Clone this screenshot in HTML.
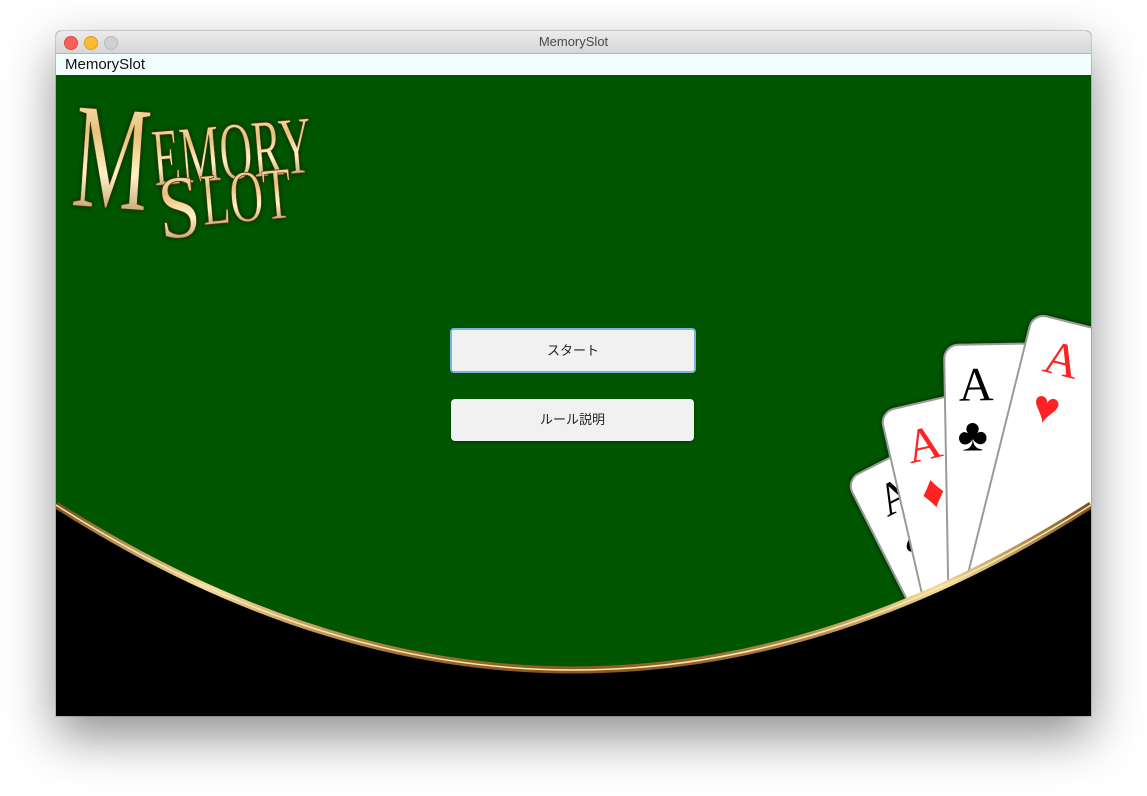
<!DOCTYPE html>
<html><head><meta charset="utf-8"><style>
html,body{margin:0;padding:0;background:#fff;width:1147px;height:796px;overflow:hidden;font-family:"Liberation Sans","Noto Sans CJK JP",sans-serif}
.win{position:absolute;left:56px;top:31px;width:1035px;height:685px;box-shadow:0 20px 50px rgba(0,0,0,.45),0 0 0 1px rgba(0,0,0,.15);border-radius:5px 5px 0 0;overflow:hidden;background:#000}
.title{height:22px;background:linear-gradient(#ececec,#d6d6d6);border-bottom:1px solid #b4b4b4;text-align:center;font-size:13px;line-height:22px;color:#4a4a4a;position:relative}
.dot{position:absolute;top:5px;width:12px;height:12px;border-radius:50%}
.menu{height:21px;background:#f2fefe;border-bottom:1px solid #999;font-size:15px;line-height:21px;padding-left:9px;color:#111}
.content{position:absolute;left:0;top:44px;width:1035px;height:641px;background:#005600}
.btn{position:absolute;background:#f1f1f1;border-radius:4px;font-size:13px;text-align:center;color:#222;box-shadow:0 1px 2px rgba(0,0,0,.4)}
</style></head><body>
<div class="win">
<div class="title"><span class="dot" style="left:8px;background:#fc5f57;border:0.5px solid #de4a42"></span><span class="dot" style="left:28px;background:#fdbc2e;border:0.5px solid #dc9d22"></span><span class="dot" style="left:48px;background:#d0d0d0;border:0.5px solid #bbb"></span>MemorySlot</div>
<div class="menu">MemorySlot</div>
<div class="content">
<svg width="1035" height="641" style="position:absolute;left:0;top:0">
<defs>
<linearGradient id="gold" x1="0" y1="0" x2="0" y2="1">
<stop offset="0" stop-color="#fff6d0"/><stop offset=".35" stop-color="#e8c27a"/><stop offset=".6" stop-color="#fff3c8"/><stop offset="1" stop-color="#9a6a2a"/></linearGradient>
<linearGradient id="rim" x1="0" y1="0" x2="0" y2="1">
<stop offset="0" stop-color="#7a5018"/><stop offset=".5" stop-color="#f6dc9a"/><stop offset="1" stop-color="#8a5a1e"/></linearGradient>
<filter id="sh"><feDropShadow dx="0" dy="0" stdDeviation="3" flood-opacity=".6"/></filter>
</defs>
<g font-family="Liberation Serif,serif" fill="url(#gold)" stroke="#5a3a10" stroke-width="0.8" filter="url(#sh)">
<text x="18" y="133" font-size="150" textLength="76" lengthAdjust="spacingAndGlyphs" transform="rotate(4 56 80)">M</text>
<text x="96" y="104" font-size="82" textLength="160" lengthAdjust="spacingAndGlyphs" transform="rotate(-5 175 75)">EMORY</text>
<text x="102" y="158" font-size="90" textLength="42" lengthAdjust="spacingAndGlyphs" transform="rotate(-5 170 130)">S</text>
<text x="146" y="148" font-size="74" textLength="90" lengthAdjust="spacingAndGlyphs" transform="rotate(-5 170 130)">LOT</text>
</g>
<g stroke="#9a9a9a" stroke-width="2" fill="#fff" font-family="Liberation Serif,serif" filter="url(#sh)">
<g transform="translate(790,405) rotate(-27)"><rect x="0" y="0" width="92" height="250" rx="14"/><text x="20" y="52" font-size="46" fill="#000" stroke="none">A</text><text x="22" y="100" font-size="44" fill="#000" stroke="none">♠</text></g>
<g transform="translate(824,337) rotate(-13)"><rect x="0" y="0" width="92" height="250" rx="14"/><text x="18" y="57" font-size="48" fill="#f22" stroke="none">A</text><text x="22" y="105" font-size="46" fill="#f22" stroke="none">♦</text></g>
<g transform="translate(888,270) rotate(-1)"><rect x="0" y="0" width="92" height="280" rx="14"/><text x="14" y="56" font-size="48" fill="#000" stroke="none">A</text><text x="12" y="106" font-size="46" fill="#000" stroke="none">♣</text></g>
<g transform="translate(977,238) rotate(14)"><rect x="0" y="0" width="110" height="300" rx="14"/><text x="22" y="54" font-size="48" fill="#f22" stroke="none">A</text><text x="22" y="104" font-size="46" fill="#f22" stroke="none">♥</text></g>
</g>
<path d="M0,430 Q518,760 1035,430 L1035,641 L0,641 Z" fill="#000"/>
<path d="M0,430 Q518,760 1035,430" fill="none" stroke="url(#rim)" stroke-width="7"/>
<path d="M0,430 Q518,760 1035,430" fill="none" stroke="#fbe7b0" stroke-width="1.5"/>
</svg>
<div class="btn" style="left:394px;top:253px;width:242px;height:41px;line-height:41px;border:2px solid #7fb3df;box-shadow:none">スタート</div>
<div class="btn" style="left:395px;top:324px;width:243px;height:42px;line-height:42px">ルール説明</div>
</div>
</div>
</body></html>
